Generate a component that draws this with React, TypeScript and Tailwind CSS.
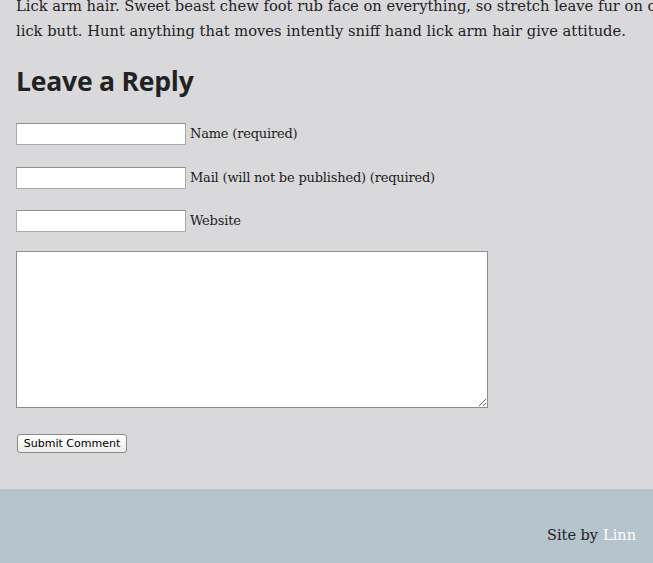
export default function App() {
  const fields = ["Name (required)", "Mail (will not be published) (required)", "Website"];

  return (
    <div className="h-[563px] w-[653px] overflow-hidden bg-[#d9d9db] flex flex-col">
      <div className="px-4 -mt-[7px] font-['DejaVu_Serif',serif] text-[#222] flex-1 min-h-0">
        {/* Post text tail */}
        <p className="text-[14.7px] leading-[25px] whitespace-nowrap">
          Lick arm hair. Sweet beast chew foot rub face on everything, so stretch leave fur on owner's
          <br />
          lick butt. Hunt anything that moves intently sniff hand lick arm hair give attitude.
        </p>

        {/* Reply form */}
        <h3 className="mt-[22px] font-['Open_Sans',sans-serif] font-bold text-[26.5px] leading-[32px] text-[#222] tracking-[-0.2px]">
          Leave a Reply
        </h3>

        <form className="mt-[26px] flex flex-col">
          {fields.map((label, i) => (
            <div key={label} className={`flex items-center ${i === 1 ? "mt-[22px]" : i === 2 ? "mt-[21px]" : ""}`}>
              <input
                type="text"
                className="w-[170px] h-[22px] bg-white border border-[#a9a9a9] border-t-[#8f8f8f]"
              />
              <label className="ml-[4px] text-[13px] tracking-[-0.2px] text-[#1c1c1c]">{label}</label>
            </div>
          ))}

          <textarea className="block mt-[19px] w-[472px] h-[157px] bg-white border border-[#8c8c8c] resize-y" />

          <button
            type="button"
            className="block mt-[26px] ml-[1px] h-[19px] w-[110px] rounded-[3px] border border-[#8a8a8a] bg-gradient-to-b from-white to-[#ececec] font-['DejaVu_Sans',sans-serif] text-[11px] leading-[17px] text-black"
          >
            Submit Comment
          </button>
        </form>
      </div>

      <footer className="h-[74px] shrink-0 bg-[#b5c3cd] flex items-center justify-end pr-[17px] pt-[20px] font-['DejaVu_Serif',serif] text-[14.5px] text-[#222]">
        Site by <span className="ml-[5px] text-white">Linn</span>
      </footer>
    </div>
  );
}
